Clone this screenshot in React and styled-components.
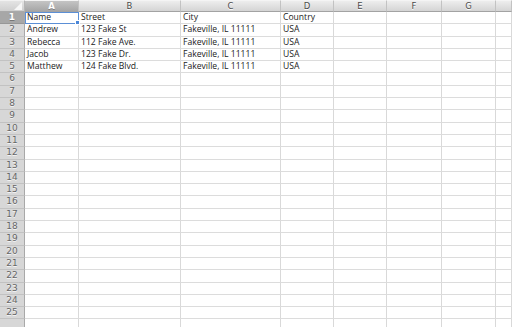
import React from 'react';
import styled, { createGlobalStyle } from 'styled-components';

const GlobalStyle = createGlobalStyle`
  html, body {
    margin: 0;
    padding: 0;
    background: #ffffff;
    overflow: hidden;
  }
`;

const columns = ['A', 'B', 'C', 'D', 'E', 'F', 'G', ''];

const data = [
  ['Name', 'Street', 'City', 'Country'],
  ['Andrew', '123 Fake St', 'Fakeville, IL 11111', 'USA'],
  ['Rebecca', '112 Fake Ave.', 'Fakeville, IL 11111', 'USA'],
  ['Jacob', '123 Fake Dr.', 'Fakeville, IL 11111', 'USA'],
  ['Matthew', '124 Fake Blvd.', 'Fakeville, IL 11111', 'USA'],
];

// the 26th row is only a sliver at the bottom edge
const ROWS = 26;
const LABELLED_ROWS = 25;

function App() {
  const rows = [];
  for (let r = 1; r <= ROWS; r++) rows.push(r);

  return (
    <>
      <GlobalStyle />
      <Sheet>
        <Corner />
        {columns.map((c, i) => (
          <ColHeader key={'h' + i} selected={i === 0}>
            {c}
          </ColHeader>
        ))}
        {rows.map((r) => (
          <React.Fragment key={r}>
            <RowHeader selected={r === 1}>{r <= LABELLED_ROWS ? r : ''}</RowHeader>
            {columns.map((c, i) => {
              const value = data[r - 1] ? data[r - 1][i] : '';
              return (
                <Cell key={c + i} active={r === 1 && i === 0}>
                  {value}
                  {r === 1 && i === 0 && <FillHandle />}
                </Cell>
              );
            })}
          </React.Fragment>
        ))}
      </Sheet>
    </>
  );
}

export default App;

const Sheet = styled.div`
  display: grid;
  grid-template-columns: 25px 54px 102px 100px 53px 53px 55px 54px 1fr;
  grid-template-rows: 12px;
  grid-auto-rows: 12.3px;
  width: 512px;
  height: 327px;
  overflow: hidden;
  font-family: 'Open Sans', 'Liberation Sans', sans-serif;
`;

const Corner = styled.div`
  position: relative;
  background: linear-gradient(#e4e4e4, #cfcfcf);
  border-top: 1px solid #f2f2f2;
  border-right: 1px solid #b5b5b5;
  border-bottom: 1px solid #a9a9a9;
  box-sizing: border-box;

  &::after {
    content: '';
    position: absolute;
    right: 2px;
    bottom: 1px;
    width: 0;
    height: 0;
    border-left: 8px solid transparent;
    border-bottom: 8px solid #f7f7f7;
  }
`;

const ColHeader = styled.div`
  background: ${(p) =>
    p.selected
      ? 'linear-gradient(#c4c4c4, #a6a6a6)'
      : 'linear-gradient(#ededed, #d4d4d4)'};
  border-top: 1px solid #f4f4f4;
  border-right: 1px solid #c2c2c2;
  border-bottom: 1px solid #a3a3a3;
  box-sizing: border-box;
  color: ${(p) => (p.selected ? '#ffffff' : '#4a4a4a')};
  text-shadow: ${(p) => (p.selected ? '0 1px 0 #7d7d7d' : '0 1px 0 #fff')};
  font-family: 'DejaVu Sans', sans-serif;
  font-size: 8.5px;
  font-weight: ${(p) => (p.selected ? 700 : 400)};
  line-height: 10px;
  text-align: center;
`;

const RowHeader = styled.div`
  background: ${(p) => (p.selected ? '#a7a7a7' : '#d7d7d7')};
  border-right: 1px solid #a9a9a9;
  border-bottom: 1px solid ${(p) => (p.selected ? '#979797' : '#c2c2c2')};
  box-sizing: border-box;
  color: ${(p) => (p.selected ? '#ffffff' : '#666666')};
  text-shadow: ${(p) => (p.selected ? '0 1px 0 #777' : '0 1px 0 #f4f4f4')};
  font-family: 'DejaVu Sans', sans-serif;
  font-size: 9px;
  font-weight: ${(p) => (p.selected ? 700 : 400)};
  line-height: 11.5px;
  text-align: center;
`;

const Cell = styled.div`
  position: relative;
  border-right: 1px solid #d9d9d9;
  border-bottom: 1px solid #dcdcdc;
  box-sizing: border-box;
  padding-left: 2px;
  font-size: 8.6px;
  line-height: 11px;
  color: #222222;
  white-space: nowrap;
  overflow: visible;
  ${(p) =>
    p.active &&
    `
    outline: 1px solid #5b8fd6;
    outline-offset: -1px;
    z-index: 1;
  `}
`;

const FillHandle = styled.span`
  position: absolute;
  right: -2px;
  bottom: -2px;
  width: 3px;
  height: 3px;
  background: #4a86d8;
  border: 1px solid #ffffff;
`;
